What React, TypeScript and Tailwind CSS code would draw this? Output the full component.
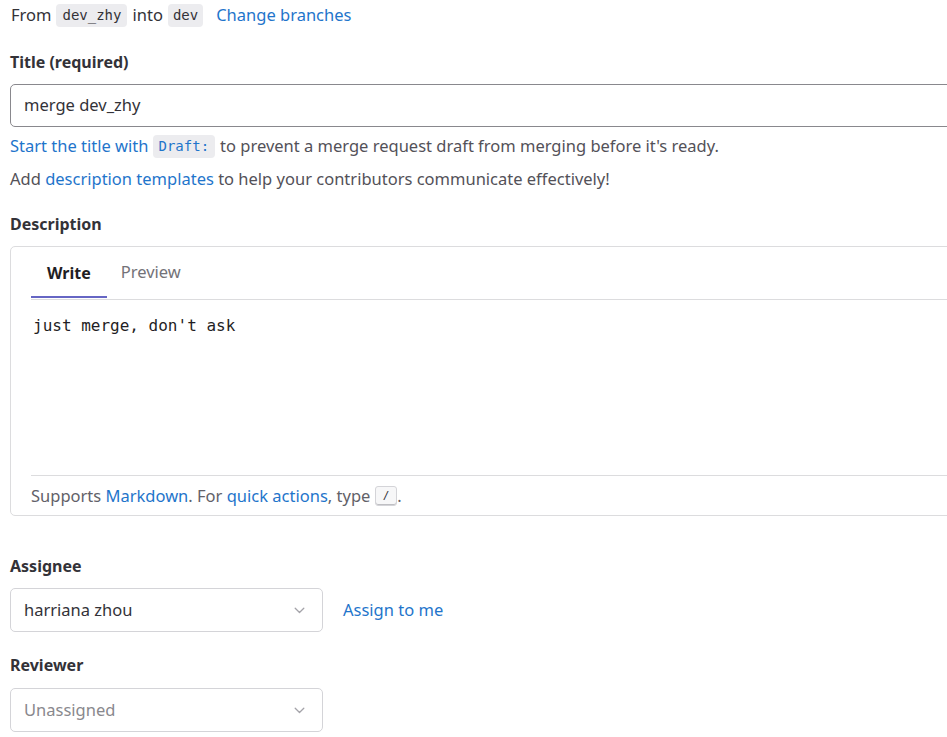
import React from "react";

const sans = { fontFamily: '"Noto Sans", "Open Sans", sans-serif' };
const mono = { fontFamily: '"DejaVu Sans Mono", "Liberation Mono", monospace' };

function Chevron() {
  return (
    <svg width="11" height="7" viewBox="0 0 11 7" fill="none">
      <path d="M1.2 1.2 L5.5 5.5 L9.8 1.2" stroke="#a4a3a9" strokeWidth="1.3" strokeLinecap="round" strokeLinejoin="round" />
    </svg>
  );
}

function Select({ value, muted }: { value: string; muted?: boolean }) {
  return (
    <div className="flex h-[44px] w-[313px] items-center justify-between rounded-[5px] border border-[#d4d4d8] bg-white pl-[13px] pr-[17px]">
      <span className={muted ? "text-[#89888d]" : "text-[#333238]"}>{value}</span>
      <Chevron />
    </div>
  );
}

export default function App() {
  return (
    <div className="w-[947px] h-[737px] overflow-hidden bg-white text-[16.5px] text-[#333238]" style={sans}>
      <div className="w-[1100px] pl-[10px]">
        {/* Row 1 */}
        <div className="flex h-[30px] items-center">
          <span className="ml-[1px]">From</span>
          <span className="ml-[5px] rounded-[4px] bg-[#ececef] px-[6px] py-[2px] text-[14px] leading-[19px] text-[#333238]" style={mono}>dev_zhy</span>
          <span className="ml-[5px]">into</span>
          <span className="ml-[5px] rounded-[4px] bg-[#ececef] px-[5px] py-[2px] text-[14px] leading-[19px] text-[#333238]" style={mono}>dev</span>
          <span className="ml-[13px] text-[#1f75cb]">Change branches</span>
        </div>

        {/* Title */}
        <div className="mt-[19px] h-[26px] text-[16px] font-bold leading-[26px]">Title (required)</div>
        <div className="mt-[9px] flex h-[43px] items-center rounded-[5px] border border-[#89888d] pl-[13px]">
          merge dev_zhy
        </div>
        <div className="mt-[6px] flex h-[26px] items-center text-[#535158]">
          <span className="text-[#1f75cb]">Start the title with</span>
          <span className="ml-[4px] rounded-[4px] bg-[#ececef] px-[6px] py-[2px] text-[14px] leading-[19px] text-[#1f75cb]" style={mono}>Draft:</span>
          <span className="ml-[5px]">to prevent a merge request draft from merging before it's ready.</span>
        </div>
        <div className="mt-[7px] flex h-[26px] items-center text-[#535158]">
          Add&nbsp;<span className="text-[#1f75cb]">description templates</span>&nbsp;to help your contributors communicate effectively!
        </div>

        {/* Description */}
        <div className="mt-[19px] h-[26px] text-[16px] font-bold leading-[26px]">Description</div>
        <div className="mt-[9px] h-[270px] rounded-[5px] border border-[#dcdcde] flex flex-col">
          <div className="mx-[20px] flex border-b border-[#dcdcde] pb-[1px]">
            <div className="flex h-[51px] items-center px-[16px] pt-[2px] pb-[2px] text-[16px] font-bold text-[#1f1e24] shadow-[inset_0_-2px_0_#6666c4]">Write</div>
            <div className="flex h-[51px] items-center px-[14px] pt-[2px] pb-[2px] text-[#737278]">Preview</div>
          </div>
          <div className="mx-[20px] flex-1 px-[2px] pt-[14px] text-[16px] leading-[24px] text-[#1f1e24]" style={mono}>
            just merge, don't ask
          </div>
          <div className="mx-[20px] flex h-[40px] items-center border-t border-[#dcdcde] pt-[1px] text-[#626168]">
            Supports&nbsp;<span className="text-[#1f75cb]">Markdown</span>. For&nbsp;<span className="text-[#1f75cb]">quick actions</span>, type&nbsp;
            <span className="inline-flex h-[20px] items-center rounded-[3px] border border-[#d4d4d8] bg-[#f7f7f8] px-[7px] text-[11px] text-[#333238] shadow-[inset_0_-1px_0_#bfbfc3]" style={mono}>/</span>.
          </div>
        </div>

        {/* Assignee */}
        <div className="mt-[37px] h-[26px] text-[16px] font-bold leading-[26px]">Assignee</div>
        <div className="mt-[9px] flex items-center">
          <Select value="harriana zhou" />
          <span className="ml-[20px] text-[#1f75cb]">Assign to me</span>
        </div>

        {/* Reviewer */}
        <div className="mt-[20px] h-[26px] text-[16px] font-bold leading-[26px]">Reviewer</div>
        <div className="mt-[10px]">
          <Select value="Unassigned" muted />
        </div>
      </div>
    </div>
  );
}
